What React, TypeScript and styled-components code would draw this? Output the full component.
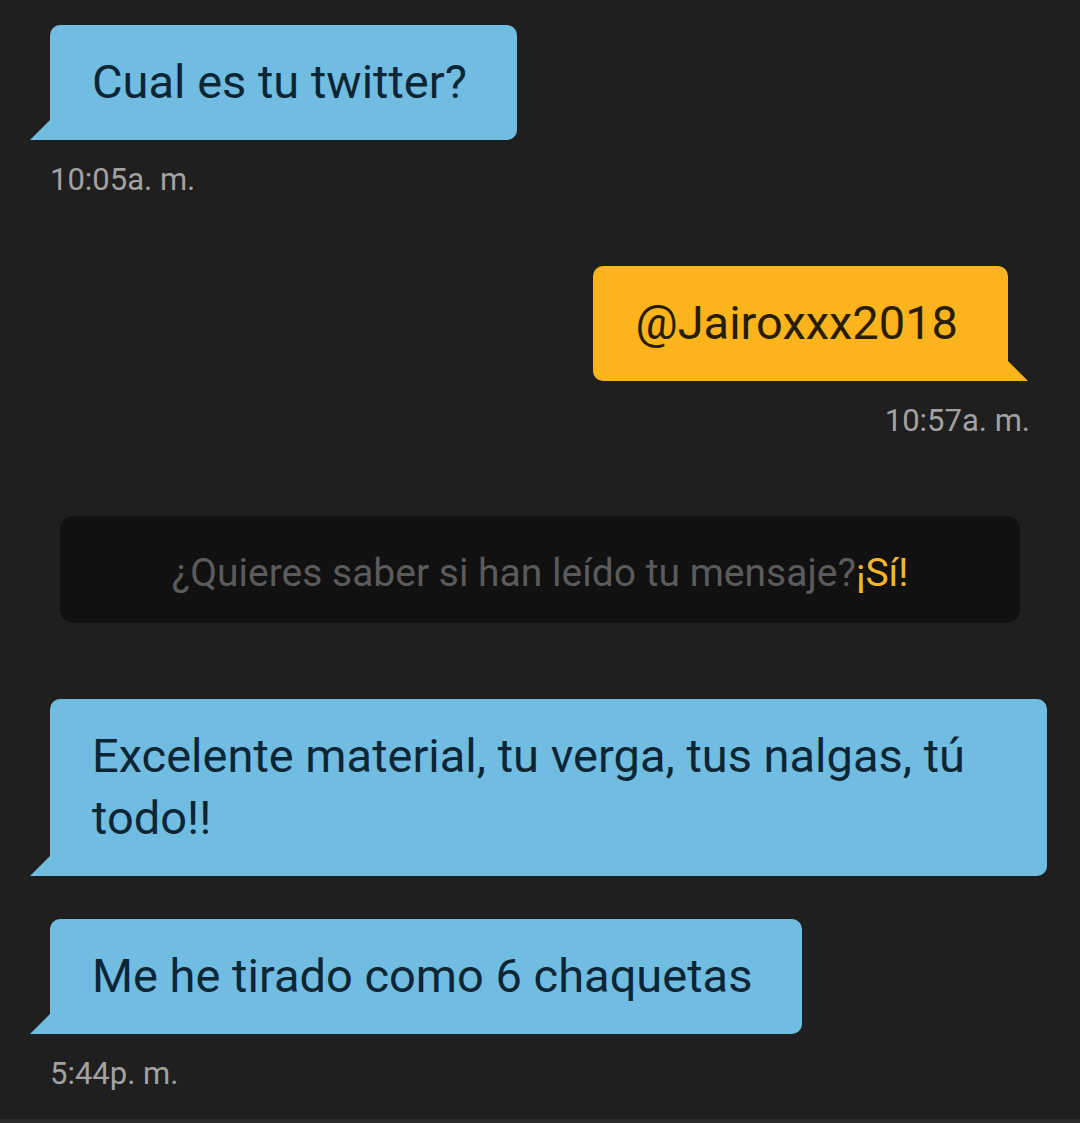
import styled, { createGlobalStyle } from "styled-components"

const GlobalStyle = createGlobalStyle`
  html, body {
    margin: 0;
    padding: 0;
    background: #1f1f1f;
  }
  body {
    font-family: Roboto, "Noto Sans", sans-serif;
  }
`

const Screen = styled.main`
  width: 1080px;
  height: 1123px;
  box-sizing: border-box;
  background: #1f1f1f;
  border-bottom: 4px solid #2b2b2b;
  padding: 25px 0 0;
  display: flex;
  flex-direction: column;
  overflow: hidden;
`

const Row = styled.div<{ $out?: boolean; $gap?: number }>`
  display: flex;
  flex-direction: column;
  align-items: ${({ $out }) => ($out ? "flex-end" : "flex-start")};
  padding: ${({ $out }) => ($out ? "0 50px 0 0" : "0 33px 0 50px")};
  margin-top: ${({ $gap }) => $gap ?? 0}px;
`

const Bubble = styled.div<{ $out?: boolean }>`
  position: relative;
  box-sizing: border-box;
  max-width: 997px;
  padding: 26px 50px 27px 42px;
  margin-right: ${({ $out }) => ($out ? "22px" : "0")};
  font-size: 47px;
  line-height: 62px;
  font-weight: 400;
  color: ${({ $out }) => ($out ? "#2a1d06" : "#0d2636")};
  background: ${({ $out }) => ($out ? "#fbb41b" : "#70bde1")};
  border-radius: ${({ $out }) => ($out ? "10px 10px 0 10px" : "10px 10px 10px 0")};

  &::before {
    content: "";
    position: absolute;
    bottom: 0;
    width: 20px;
    height: 20px;
    background: inherit;
    ${({ $out }) =>
      $out
        ? "right: -20px; clip-path: polygon(0 0, 100% 100%, 0 100%);"
        : "left: -20px; clip-path: polygon(100% 0, 100% 100%, 0 100%);"}
  }
`

const Time = styled.div`
  margin-top: 20px;
  font-size: 31px;
  line-height: 40px;
  color: #a2a2a2;
`

const Banner = styled.div`
  margin: 75px 60px 0;
  height: 107px;
  border-radius: 14px;
  background: #111111;
  display: flex;
  align-items: center;
  justify-content: center;
  font-size: 39px;
  color: #5b5b5b;
  padding-top: 6px;
  box-sizing: border-box;
`

const Yes = styled.span`
  color: #f4b42c;
`

export default function App() {
  return (
    <>
      <GlobalStyle />
      <Screen>
        <Row>
          <Bubble>Cual es tu twitter?</Bubble>
          <Time>10:05a. m.</Time>
        </Row>
        <Row $out $gap={66}>
          <Bubble $out>@Jairoxxx2018</Bubble>
          <Time>10:57a. m.</Time>
        </Row>
        <Banner>
          ¿Quieres saber si han leído tu mensaje?<Yes>¡Sí!</Yes>
        </Banner>
        <Row $gap={76}>
          <Bubble>Excelente material, tu verga, tus nalgas, tú todo!!</Bubble>
        </Row>
        <Row $gap={43}>
          <Bubble>Me he tirado como 6 chaquetas</Bubble>
          <Time>5:44p. m.</Time>
        </Row>
      </Screen>
    </>
  )
}
